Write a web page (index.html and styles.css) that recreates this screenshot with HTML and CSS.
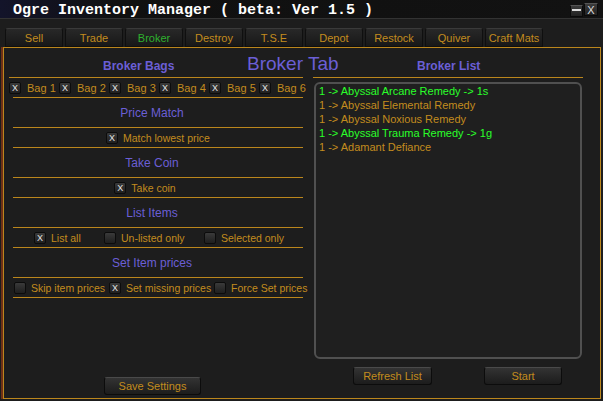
FILE: index.html
```html
<!DOCTYPE html>
<html lang="en">
<head>
  <meta charset="UTF-8" />
  <title>Ogre Inventory Manager</title>
  <link rel="stylesheet" href="styles.css">
</head>
<body>
  <div class="window">
    <header class="titlebar">
      <span class="title">Ogre Inventory Manager ( beta: Ver 1.5 )</span>
      <span class="win-btn min"><i></i></span>
      <span class="win-btn close">X</span>
    </header>

    <nav class="tabs">
      <button class="tab">Sell</button>
      <button class="tab">Trade</button>
      <button class="tab active">Broker</button>
      <button class="tab">Destroy</button>
      <button class="tab">T.S.E</button>
      <button class="tab">Depot</button>
      <button class="tab">Restock</button>
      <button class="tab">Quiver</button>
      <button class="tab">Craft Mats</button>
    </nav>

    <main class="panel">
      <div class="panel-head">
        <span class="head-bags">Broker Bags</span>
        <span class="head-tab">Broker Tab</span>
        <span class="head-list">Broker List</span>
      </div>

      <div class="panel-body">
        <section class="left">
          <div class="row bags">
            <label class="opt"><span class="check on">X</span>Bag 1</label>
            <label class="opt"><span class="check on">X</span>Bag 2</label>
            <label class="opt"><span class="check on">X</span>Bag 3</label>
            <label class="opt"><span class="check on">X</span>Bag 4</label>
            <label class="opt"><span class="check on">X</span>Bag 5</label>
            <label class="opt"><span class="check on">X</span>Bag 6</label>
          </div>
          <div class="sect">Price Match</div>
          <div class="row center">
            <label class="opt"><span class="check on">X</span>Match lowest price</label>
          </div>
          <div class="sect">Take Coin</div>
          <div class="row center shift">
            <label class="opt"><span class="check on">X</span>Take coin</label>
          </div>
          <div class="sect">List Items</div>
          <div class="row list-opts">
            <label class="opt"><span class="check on">X</span>List all</label>
            <label class="opt"><span class="check"></span>Un-listed only</label>
            <label class="opt"><span class="check"></span>Selected only</label>
          </div>
          <div class="sect">Set Item prices</div>
          <div class="row price-opts last">
            <label class="opt"><span class="check"></span>Skip item prices</label>
            <label class="opt"><span class="check on">X</span>Set missing prices</label>
            <label class="opt"><span class="check"></span>Force Set prices</label>
          </div>
          <button class="btn save">Save Settings</button>
        </section>

        <section class="right">
          <div class="rule"></div>
          <ul class="broker-list">
            <li class="priced">1 -&gt; Abyssal Arcane Remedy -&gt; 1s</li>
            <li>1 -&gt; Abyssal Elemental Remedy</li>
            <li>1 -&gt; Abyssal Noxious Remedy</li>
            <li class="priced">1 -&gt; Abyssal Trauma Remedy -&gt; 1g</li>
            <li>1 -&gt; Adamant Defiance</li>
          </ul>
          <div class="list-btns">
            <button class="btn refresh">Refresh List</button>
            <button class="btn start">Start</button>
          </div>
        </section>
      </div>
    </main>
  </div>
</body>
</html>
```

FILE: styles.css
```css
:root {
  --bg: #1d1d1d;
  --gold: #c38c1e;
  --line: #bb861c;
  --purple: #6b5fd6;
  --green: #2aff2a;
}

body {
  margin: 0;
  background: #000;
  font-family: 'Liberation Sans', Arial, sans-serif;
}

.window {
  width: 603px;
  height: 401px;
  background: var(--bg);
  overflow: hidden;
}

/* title bar */
.titlebar {
  height: 18px;
  display: flex;
  align-items: flex-start;
  padding: 0 5px 0 13px;
  background: linear-gradient(to right, #13142a, #101010 20%, #121212);
  border-bottom: 1px solid #333;
}

.title {
  margin-top: 3px;
  line-height: 16px;
  font-family: 'Liberation Mono', 'Courier New', monospace;
  font-weight: bold;
  font-size: 15px;
  color: #fff;
  white-space: pre;
}

.win-btn {
  box-sizing: border-box;
  background: linear-gradient(#3c3c3c, #222);
  border: 1px solid #0a0a0a;
  border-top-color: #555;
}

.win-btn.min {
  margin: 5px 1px 0 auto;
  width: 13px;
  height: 12px;
  display: flex;
  align-items: center;
  justify-content: center;
}

.win-btn.min i {
  width: 9px;
  height: 2px;
  background: #ddd;
  margin-top: -2px;
}

.win-btn.close {
  margin-top: 3px;
  width: 14px;
  height: 13px;
  font-size: 11px;
  line-height: 12px;
  text-align: center;
  color: #ddd;
}

/* tabs */
.tabs {
  display: flex;
  gap: 2px;
  padding: 9px 0 0 5px;
  height: 19px;
}

.tab {
  width: 58px;
  height: 19px;
  padding: 0;
  font-family: inherit;
  font-size: 11px;
  color: var(--gold);
  background: linear-gradient(#282828, #181818);
  border: 1px solid #0f0f0f;
  border-top-color: #3a3a3a;
  border-radius: 3px 3px 0 0;
}

.tab.active {
  color: #2fb02f;
}

/* main panel */
.panel {
  box-sizing: border-box;
  margin-left: 3px;
  width: 598px;
  height: 352px;
  border: 1px solid var(--line);
  box-shadow: -2px 0 0 #6e3016;
}

.panel-head {
  box-sizing: border-box;
  height: 29px;
  padding-top: 5px;
  display: flex;
  align-items: baseline;
}

.head-bags {
  margin-left: 99px;
  width: 144px;
  font-weight: bold;
  font-size: 12px;
  color: var(--purple);
}

.head-tab {
  width: 170px;
  font-size: 19px;
  color: var(--purple);
}

.head-list {
  font-weight: bold;
  font-size: 12px;
  color: var(--purple);
}

.panel-body {
  display: grid;
  grid-template-columns: 290px 270px;
  column-gap: 10px;
  padding-left: 9px;
}

/* left column */
.row {
  height: 19px;
  border-top: 1px solid var(--line);
  display: flex;
  align-items: center;
  font-size: 10.5px;
  color: var(--gold);
}

.row.last {
  border-bottom: 1px solid var(--line);
}

.row.center {
  justify-content: center;
}

.row.shift {
  padding-right: 26px;
}

.sect {
  height: 29px;
  border-top: 1px solid var(--line);
  display: flex;
  align-items: center;
  justify-content: center;
  padding-right: 12px;
  font-size: 12px;
  color: var(--purple);
}

.opt {
  display: flex;
  align-items: center;
  gap: 5px;
  white-space: nowrap;
}

.bags {
  margin-left: -4px;
  display: grid;
  grid-template-columns: repeat(6, 50px);
}

.bags .opt {
  gap: 6px;
  font-size: 11px;
}

.list-opts {
  display: grid;
  grid-template-columns: 70px 100px auto;
  padding-left: 21px;
}

.price-opts {
  display: grid;
  grid-template-columns: 95px 105px auto;
  padding-left: 1px;
}

.check {
  box-sizing: border-box;
  width: 12px;
  height: 12px;
  flex: none;
  border: 1px solid #0c0c0c;
  border-radius: 2px;
  background: linear-gradient(#3a3a3a, #1f1f1f);
  font-size: 9px;
  line-height: 10px;
  text-align: center;
  color: #e6e6e6;
}

.btn {
  box-sizing: border-box;
  height: 18px;
  padding: 0;
  font-family: inherit;
  font-size: 11px;
  color: var(--gold);
  background: linear-gradient(#333, #1c1c1c);
  border: 1px solid #0c0c0c;
  border-top-color: #4a4a4a;
  border-radius: 3px;
}

.save {
  display: block;
  margin: 79px 0 0 91px;
  width: 97px;
}

/* right column */
.rule {
  border-top: 1px solid var(--line);
}

.broker-list {
  box-sizing: border-box;
  list-style: none;
  margin: 4px 1px 0;
  padding: 0 3px;
  height: 277px;
  border: 2px solid #505050;
  border-radius: 6px;
  background: #1f1f1f;
  font-size: 11px;
  line-height: 14px;
  color: var(--gold);
}

.broker-list .priced {
  color: var(--green);
}

.list-btns {
  display: flex;
  gap: 52px;
  margin: 8px 0 0 40px;
}

.refresh {
  width: 79px;
}

.start {
  width: 78px;
}
```
